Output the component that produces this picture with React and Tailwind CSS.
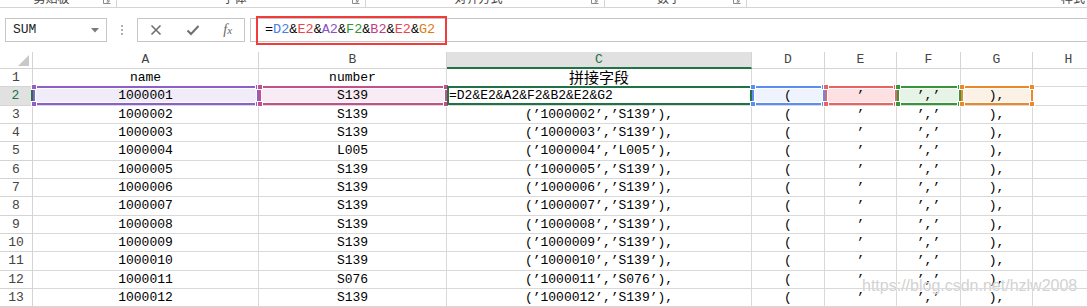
import React from 'react';

const mono = { fontFamily: '"Liberation Mono", "Noto Sans CJK SC", monospace' };

const cols = [
  { key: 'A', w: 'w-[226px]' },
  { key: 'B', w: 'w-[188px]' },
  { key: 'C', w: 'w-[305px]' },
  { key: 'D', w: 'w-[73px]' },
  { key: 'E', w: 'w-[72px]' },
  { key: 'F', w: 'w-[64px]' },
  { key: 'G', w: 'w-[72px]' },
  { key: 'H', w: 'w-[72px]' },
];

const heights = ['h-[18px]', 'h-[19px]', 'h-[18px]', 'h-[18px]', 'h-[19px]', 'h-[18px]', 'h-[18px]', 'h-[19px]', 'h-[18px]', 'h-[18px]', 'h-[19px]', 'h-[18px]', 'h-[18px]'];

const data = [
  ['1000002', 'S139'],
  ['1000003', 'S139'],
  ['1000004', 'L005'],
  ['1000005', 'S139'],
  ['1000006', 'S139'],
  ['1000007', 'S139'],
  ['1000008', 'S139'],
  ['1000009', 'S139'],
  ['1000010', 'S139'],
  ['1000011', 'S076'],
  ['1000012', 'S139'],
];

const refs = {
  A: { border: 'border-[#8c5fc9]', dot: 'bg-[#8c5fc9]', fill: 'bg-[#f1edf8]' },
  B: { border: 'border-[#c1508c]', dot: 'bg-[#c1508c]', fill: 'bg-[#f8ebf3]' },
  D: { border: 'border-[#5b8ef0]', dot: 'bg-[#5b8ef0]', fill: 'bg-[#eef3fd]' },
  E: { border: 'border-[#e86464]', dot: 'bg-[#e86464]', fill: 'bg-[#fde0e1]' },
  F: { border: 'border-[#35973a]', dot: 'bg-[#35973a]', fill: 'bg-[#e8f3e7]' },
  G: { border: 'border-[#e8892a]', dot: 'bg-[#e8892a]', fill: 'bg-[#fcf1e6]' },
};

function RefBox({ c }) {
  const r = refs[c];
  return (
    <div className={`pointer-events-none absolute -top-px left-0 -right-px bottom-0 z-10 border-2 ${r.border}`}>
      <div className="absolute inset-0 border border-white/80" />
      <div className={`absolute -left-[4px] -top-[4px] h-[6px] w-[6px] border border-white ${r.dot}`} />
      <div className={`absolute -right-[4px] -top-[4px] h-[6px] w-[6px] border border-white ${r.dot}`} />
      <div className={`absolute -left-[4px] -bottom-[4px] h-[6px] w-[6px] border border-white ${r.dot}`} />
      <div className={`absolute -right-[4px] -bottom-[4px] h-[6px] w-[6px] border border-white ${r.dot}`} />
    </div>
  );
}

function Launcher() {
  return (
    <svg width="8" height="8" viewBox="0 0 8 8" className="-mt-[4px]">
      <path d="M0.5 0.5v7h7" fill="none" stroke="#8a8a8a" />
      <path d="M3 3l3 3M6 3.5V6H3.5" fill="none" stroke="#8a8a8a" />
    </svg>
  );
}

function Group({ w, label }) {
  return (
    <div className={`flex shrink-0 items-start border-r border-[#d4d4d4] ${w}`}>
      <div className="-mt-[8px] flex-1 text-center text-[12px] leading-none text-[#444]" style={{ fontFamily: '"Noto Sans CJK SC", sans-serif' }}>
        {label}
      </div>
      <div className="mr-[5px] w-[8px]">
        <Launcher />
      </div>
    </div>
  );
}

function Cell({ w, h, children, className = '' }) {
  return (
    <div className={`relative flex shrink-0 items-center border-r border-b border-[#d9d9d9] text-[13px] text-black ${w} ${h} ${className}`}>
      {children}
    </div>
  );
}

export default function App() {
  const rows = [
    { n: 1, vals: ['name', 'number', '拼接字段', '', '', '', '', ''] },
    { n: 2, vals: ['1000001', 'S139', '=D2&E2&A2&F2&B2&E2&G2', '(', '’', '’,’', '),', ''] },
    ...data.map(([a, b], i) => ({ n: i + 3, vals: [a, b, `(’${a}’,’${b}’),`, '(', '’', '’,’', '),', ''] })),
  ];

  return (
    <div className="relative h-[307px] w-[1087px] overflow-hidden bg-white" style={mono}>
      {/* ribbon group labels, cut off at the top */}
      <div className="flex h-[8px] overflow-hidden border-b border-[#d4d4d4]">
        <Group w="w-[117px]" label="剪贴板" />
        <Group w="w-[249px]" label="字体" />
        <Group w="w-[239px]" label="对齐方式" />
        <Group w="w-[142px]" label="数字" />
        <div className="flex flex-1 justify-end pr-[2px]">
          <div className="-mt-[8px] text-[12px] leading-none text-[#444]" style={{ fontFamily: '"Noto Sans CJK SC", sans-serif' }}>样式</div>
        </div>
      </div>

      {/* formula bar */}
      <div className="mt-[10px] flex h-[24px]">
        <div className="ml-[5px] flex w-[102px] items-center justify-between border border-[#c6c6c6] pl-[7px] pr-[7px] text-[13px] text-[#222]">
          <span>SUM</span>
          <svg width="8" height="5" viewBox="0 0 8 5">
            <path d="M0 0h8L4 4.5z" fill="#7a7a7a" />
          </svg>
        </div>
        <div className="flex w-[30px] flex-col items-center justify-center gap-[2px]">
          <div className="h-[2px] w-[2px] bg-[#b0b0b0]" />
          <div className="h-[2px] w-[2px] bg-[#b0b0b0]" />
          <div className="h-[2px] w-[2px] bg-[#b0b0b0]" />
        </div>
        <div className="flex w-[108px] items-center justify-around border border-[#c6c6c6]">
          <svg width="12" height="12" viewBox="0 0 12 12">
            <path d="M1.5 1.5l9 9M10.5 1.5l-9 9" stroke="#6f6f6f" strokeWidth="1.6" />
          </svg>
          <svg width="14" height="12" viewBox="0 0 14 12">
            <path d="M1.5 6.5l3.5 3.5 7.5-8" fill="none" stroke="#6f6f6f" strokeWidth="2" />
          </svg>
          <span className="text-[14px] italic leading-none text-[#666]" style={{ fontFamily: '"Liberation Serif", serif' }}>
            f<span className="text-[11px]">x</span>
          </span>
        </div>
        <div className="ml-[5px] flex flex-1 items-center border-y border-l border-[#c6c6c6] pl-[14px] text-[13.5px]">
          <span className="text-black">=</span>
          <span className="text-[#4a7ee6]">D2</span>
          <span className="text-black">&amp;</span>
          <span className="text-[#e8474a]">E2</span>
          <span className="text-black">&amp;</span>
          <span className="text-[#8a52c8]">A2</span>
          <span className="text-black">&amp;</span>
          <span className="text-[#2f982f]">F2</span>
          <span className="text-black">&amp;</span>
          <span className="text-[#c0407f]">B2</span>
          <span className="text-black">&amp;</span>
          <span className="text-[#e8474a]">E2</span>
          <span className="text-black">&amp;</span>
          <span className="text-[#e07b12]">G2</span>
        </div>
      </div>

      {/* red annotation */}
      <div className="pointer-events-none absolute left-[256px] top-[16px] h-[29px] w-[191px] border-2 border-[#f23b3b]" />

      {/* sheet */}
      <div className="mt-[10px]">
        <div className="flex h-[17px]">
          <div className="relative w-[33px] shrink-0 border-r border-b border-[#d4d4d4]">
            <svg width="11" height="11" viewBox="0 0 11 11" className="absolute bottom-[2px] right-[3px]">
              <path d="M11 0v11H0z" fill="#c8c8c8" />
            </svg>
          </div>
          {cols.map((c) =>
            c.key === 'C' ? (
              <div key={c.key} className={`flex shrink-0 items-center justify-center border-r border-b-2 border-r-[#d4d4d4] border-b-[#217346] bg-[#e1e1e1] text-[13px] text-[#217346] ${c.w}`}>
                {c.key}
              </div>
            ) : (
              <div key={c.key} className={`flex shrink-0 items-center justify-center border-r border-b border-[#d4d4d4] text-[13px] text-[#444] ${c.w}`}>
                {c.key}
              </div>
            )
          )}
        </div>

        {rows.map((r, i) => {
          const h = heights[i];
          const sel = r.n === 2;
          return (
            <div key={r.n} className="flex">
              <div
                className={`flex w-[33px] shrink-0 items-center justify-center border-b border-[#d4d4d4] text-[13px] ${h} ${
                  sel ? 'border-r-2 border-r-[#217346] bg-[#e1e1e1] text-[#217346]' : 'border-r text-[#444]'
                }`}
              >
                {r.n}
              </div>
              {cols.map((c, j) => {
                const v = r.vals[j];
                if (sel && c.key === 'C') {
                  return (
                    <Cell key={c.key} w={c.w} h={h} className="justify-start pl-[2px]">
                      {v}
                      <div className="pointer-events-none absolute -top-px left-0 -right-px bottom-0 z-10 border-2 border-[#217346]" />
                    </Cell>
                  );
                }
                if (sel && refs[c.key]) {
                  return (
                    <Cell key={c.key} w={c.w} h={h} className={`justify-center ${refs[c.key].fill}`}>
                      {v}
                      <RefBox c={c.key} />
                    </Cell>
                  );
                }
                return (
                  <Cell key={c.key} w={c.w} h={h} className="justify-center">
                    {c.key === 'C' && r.n === 1 ? (
                      <span className="text-[15px]" style={{ fontFamily: '"Noto Sans CJK SC", sans-serif' }}>{v}</span>
                    ) : (
                      v
                    )}
                  </Cell>
                );
              })}
            </div>
          );
        })}
      </div>

      {/* watermark */}
      <div
        className="pointer-events-none absolute left-[862px] top-[278px] text-[16px] leading-none text-[#d2d2d2]"
        style={{ fontFamily: '"Liberation Sans", Arial, sans-serif', textShadow: '0 0 1px #fff' }}
      >
        https://blog.csdn.net/hzlw2008
      </div>
    </div>
  );
}
